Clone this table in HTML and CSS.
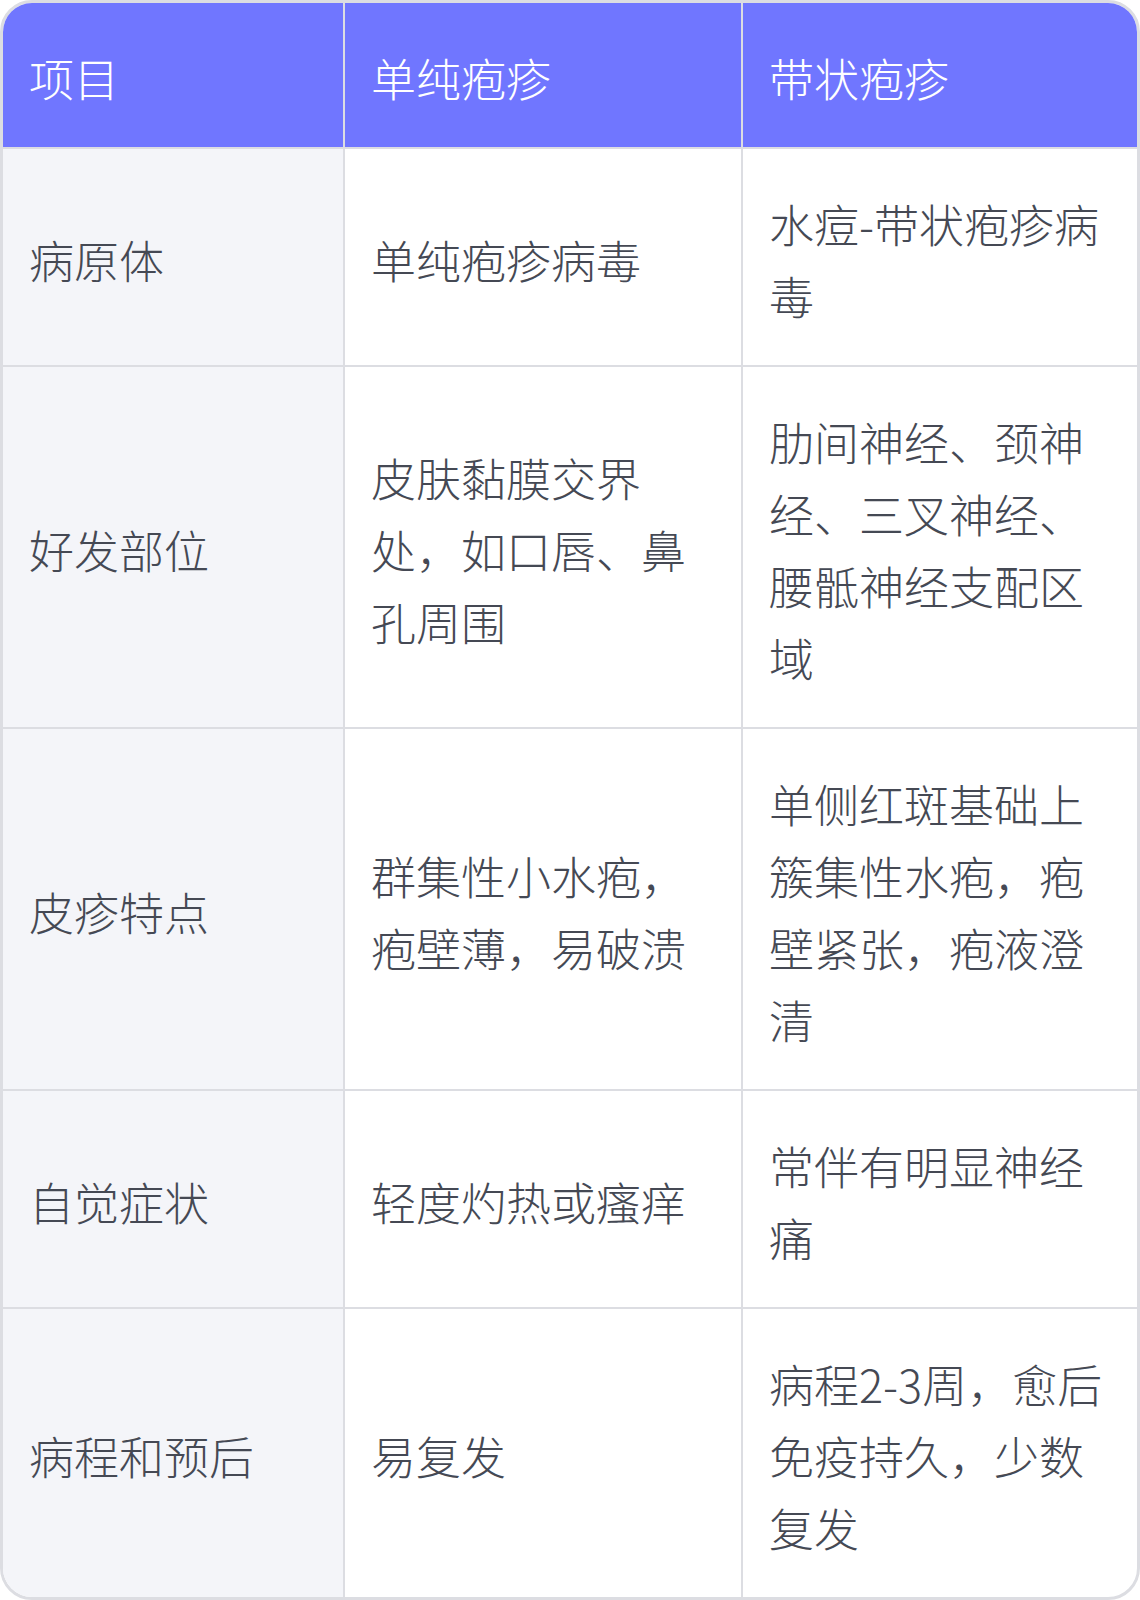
FILE: index.html
```html
<!DOCTYPE html>
<html lang="zh-CN">
<head>
<meta charset="utf-8">
<title>单纯疱疹与带状疱疹对比</title>
<link rel="stylesheet" href="styles.css">
</head>
<body>
<div class="card">
  <table class="cmp">
    <colgroup>
      <col class="c1">
      <col class="c2">
      <col class="c3">
    </colgroup>
    <thead>
      <tr>
        <th>项目</th>
        <th>单纯疱疹</th>
        <th>带状疱疹</th>
      </tr>
    </thead>
    <tbody>
      <tr>
        <td class="label">病原体</td>
        <td>单纯疱疹病毒</td>
        <td>水痘-带状疱疹病毒</td>
      </tr>
      <tr>
        <td class="label">好发部位</td>
        <td>皮肤黏膜交界处，如口唇、鼻孔周围</td>
        <td>肋间神经、颈神经、三叉神经、腰骶神经支配区域</td>
      </tr>
      <tr>
        <td class="label">皮疹特点</td>
        <td>群集性小水疱，疱壁薄，易破溃</td>
        <td>单侧红斑基础上簇集性水疱，疱壁紧张，疱液澄清</td>
      </tr>
      <tr>
        <td class="label">自觉症状</td>
        <td>轻度灼热或瘙痒</td>
        <td>常伴有明显神经痛</td>
      </tr>
      <tr>
        <td class="label">病程和预后</td>
        <td>易复发</td>
        <td>病程2-3周，愈后免疫持久，少数复发</td>
      </tr>
    </tbody>
  </table>
</div>
</body>
</html>
```

FILE: styles.css
```css
html, body {
  margin: 0;
  padding: 0;
  background: #ffffff;
}

body {
  font-family: "Noto Sans CJK SC", "Noto Sans", sans-serif;
  width: 1140px;
}

.card {
  border: 3px solid #dcdde2;
  border-radius: 32px;
  overflow: hidden;
  background: #ffffff;
}

.cmp {
  width: 100%;
  table-layout: fixed;
  border-collapse: collapse;
  border-style: hidden;
}

.c1 { width: 341px; }
.c2 { width: 398px; }
.c3 { width: 395px; }

.cmp th,
.cmp td {
  border: 2px solid #dcdde2;
  padding: 39px 24px 33px 26px;
  font-size: 45px;
  line-height: 72px;
  text-align: left;
  vertical-align: middle;
  color: #454954;
  font-weight: 300;
}

.cmp th {
  background: #7076ff;
  color: #ffffff;
}

.cmp td.label {
  background: #f4f5f9;
}
```
